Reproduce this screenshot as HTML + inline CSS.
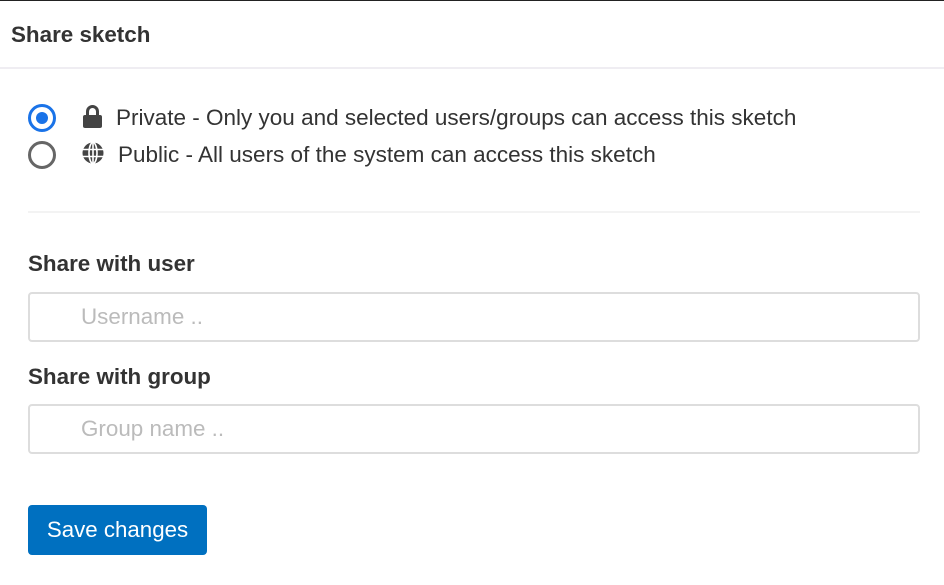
<!DOCTYPE html>
<html><head><meta charset="utf-8"><style>
body{margin:0;width:944px;height:585px;background:#fff;font-family:"Liberation Sans",sans-serif;color:#333;position:relative;overflow:hidden}
.top{position:absolute;left:0;top:0;width:944px;height:1px;background:#222}
.h{position:absolute;left:11px;top:22px;font-size:22.4px;font-weight:bold;color:#333}
.hl{position:absolute;left:0;top:67px;width:944px;height:2px;background:#efedf2}
.radio{position:absolute;left:28px;width:28px;height:28px;border-radius:50%;border:3px solid #666;box-sizing:border-box}
.radio.on{border:3px solid #1a73e8}
.radio.on::after{content:"";position:absolute;left:5px;top:5px;width:12px;height:12px;border-radius:50%;background:#1a73e8}
.t{position:absolute;font-size:22.5px;color:#333;white-space:nowrap}
.ic{position:absolute;left:82px}
.dv{position:absolute;left:28px;top:211px;width:892px;height:2px;background:#f3f3f3}
.lb{position:absolute;left:28px;font-size:22.4px;font-weight:bold;color:#333}
.in{position:absolute;left:28px;width:892px;height:50px;border:2px solid #ddd;border-radius:4px;box-sizing:border-box}
.in span{position:absolute;left:51px;top:10px;font-size:22.4px;color:#bbb}
.btn{position:absolute;left:28px;top:505px;width:179px;height:50px;background:#0070c0;border-radius:4px;color:#fff;font-size:22.3px;line-height:50px;text-align:center}
</style></head><body>
<div class="top"></div>
<div class="h">Share sketch</div>
<div class="hl"></div>
<div class="radio on" style="top:104px"></div>
<div class="radio" style="top:141px"></div>
<svg class="ic" style="top:104px" width="21" height="24" viewBox="0 0 21 24"><path d="M5.5 12V7.5a5 5 0 0 1 10 0V12" fill="none" stroke="#444" stroke-width="3"/><rect x="1" y="11" width="19" height="13" rx="2" fill="#444"/></svg>
<svg class="ic" style="top:142px" width="22" height="22" viewBox="0 0 22 22"><circle cx="11" cy="11" r="10.5" fill="#444"/><g stroke="#fff" stroke-width="1.6" fill="none"><ellipse cx="11" cy="11" rx="4" ry="10.5"/><line x1="0" y1="7.5" x2="22" y2="7.5"/><line x1="0" y1="14.5" x2="22" y2="14.5"/><line x1="11" y1="0" x2="11" y2="22"/></g></svg>
<div class="t" style="left:116px;top:105px">Private - Only you and selected users/groups can access this sketch</div>
<div class="t" style="left:118px;top:142px">Public - All users of the system can access this sketch</div>
<div class="dv"></div>
<div class="lb" style="top:251px">Share with user</div>
<div class="in" style="top:292px"><span>Username ..</span></div>
<div class="lb" style="top:364px">Share with group</div>
<div class="in" style="top:404px"><span>Group name ..</span></div>
<div class="btn">Save changes</div>
</body></html>
